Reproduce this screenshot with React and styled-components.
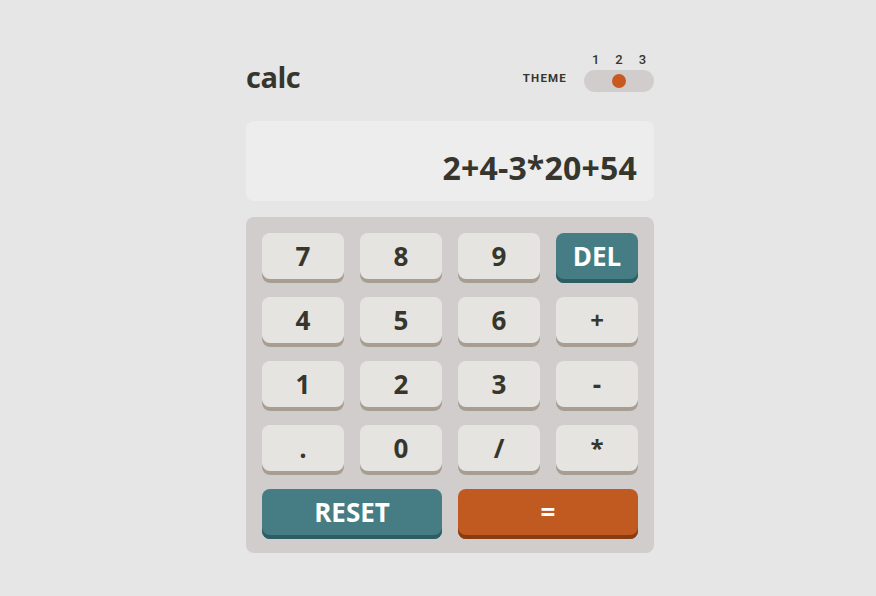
import React from "react";
import styled, { createGlobalStyle } from "styled-components";

const Global = createGlobalStyle`
  html, body { margin: 0; padding: 0; }
  body {
    background: #e6e6e6;
    font-family: "Open Sans", "Liberation Sans", sans-serif;
    color: #36362c;
  }
`;

const Page = styled.div`
  display: flex;
  justify-content: center;
  padding: 53px 0 0 24px;
`;

const Calculator = styled.main`
  width: 408px;
  display: flex;
  flex-direction: column;
`;

const Header = styled.header`
  display: flex;
  justify-content: space-between;
  align-items: flex-end;
  margin-bottom: 29px;
`;

const Title = styled.h1`
  margin: 0 0 1px 0;
  font-size: 29px;
  line-height: 29px;
  font-weight: 700;
  letter-spacing: -0.5px;
  color: #36362c;
`;

const ThemeGroup = styled.div`
  display: flex;
  align-items: flex-end;
  gap: 17px;
`;

const ThemeLabel = styled.span`
  font-family: Roboto, "Liberation Sans", sans-serif;
  font-size: 11.5px;
  font-weight: 700;
  letter-spacing: 1.2px;
  line-height: 22px;
  margin-bottom: 3px;
  color: #36362c;
`;

const Switch = styled.div`
  display: flex;
  flex-direction: column;
  width: 70px;
`;

const Numbers = styled.div`
  display: grid;
  grid-template-columns: repeat(3, 1fr);
  font-family: Roboto, "Liberation Sans", sans-serif;
  font-size: 13px;
  font-weight: 500;
  line-height: 14px;
  text-align: center;
  margin-bottom: 3px;
  color: #36362c;
`;

const Track = styled.div`
  height: 22px;
  border-radius: 11px;
  background: #d2cdcd;
  display: flex;
  align-items: center;
  justify-content: ${(p) => (p.$pos === 1 ? "flex-start" : p.$pos === 3 ? "flex-end" : "center")};
  padding: 0 5px;
`;

const Knob = styled.span`
  width: 14px;
  height: 14px;
  border-radius: 50%;
  background: #c85a20;
`;

const Screen = styled.section`
  height: 80px;
  box-sizing: border-box;
  border-radius: 8px;
  background: #ededed;
  display: flex;
  justify-content: flex-end;
  align-items: center;
  padding: 12px 17px 0;
  margin-bottom: 16px;
`;

const Display = styled.span`
  font-size: 32px;
  font-weight: 700;
  letter-spacing: 0.2px;
  color: #36362c;
`;

const Keypad = styled.section`
  background: #d2cdcd;
  border-radius: 8px;
  padding: 16px 16px 14px;
  display: grid;
  grid-template-columns: repeat(4, 1fr);
  grid-auto-rows: 50px;
  column-gap: 16px;
  row-gap: 14px;
`;

const variants = {
  num: { bg: "#e6e4e1", shadow: "#a79e91", color: "#36362c" },
  teal: { bg: "#467d84", shadow: "#2b5d62", color: "#ffffff" },
  orange: { bg: "#c05a20", shadow: "#873c12", color: "#ffffff" },
};

const Key = styled.button`
  grid-column: span ${(p) => p.$span || 1};
  border: none;
  border-radius: 8px;
  padding: 0 0 4px;
  background: ${(p) => variants[p.$variant].bg};
  box-shadow: inset 0 -4px 0 ${(p) => variants[p.$variant].shadow};
  color: ${(p) => variants[p.$variant].color};
  font-family: "Open Sans", "Liberation Sans", sans-serif;
  font-size: ${(p) => (p.$small ? "24px" : "26px")};
  font-weight: 700;
  line-height: 1;
  display: flex;
  align-items: center;
  justify-content: center;
  cursor: pointer;
`;

const keys = [
  ["7"], ["8"], ["9"], ["DEL", "teal"],
  ["4"], ["5"], ["6"], ["+", "num", 1, true],
  ["1"], ["2"], ["3"], ["-"],
  ["."], ["0"], ["/"], ["*", "num", 1, true],
  ["RESET", "teal", 2], ["=", "orange", 2],
];

export default function App() {
  return (
    <>
      <Global />
      <Page>
        <Calculator>
          <Header>
            <Title>calc</Title>
            <ThemeGroup>
              <ThemeLabel>THEME</ThemeLabel>
              <Switch>
                <Numbers>
                  <span>1</span>
                  <span>2</span>
                  <span>3</span>
                </Numbers>
                <Track $pos={2}>
                  <Knob />
                </Track>
              </Switch>
            </ThemeGroup>
          </Header>
          <Screen>
            <Display>2+4-3*20+54</Display>
          </Screen>
          <Keypad>
            {keys.map(([label, variant = "num", span, small]) => (
              <Key key={label} $variant={variant} $span={span} $small={small}>
                {label}
              </Key>
            ))}
          </Keypad>
        </Calculator>
      </Page>
    </>
  );
}
